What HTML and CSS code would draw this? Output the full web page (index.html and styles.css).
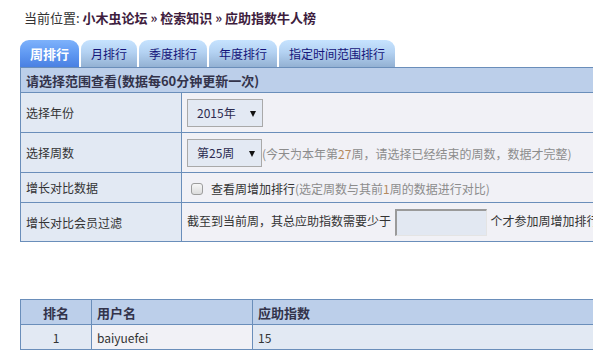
FILE: index.html
```html
<!DOCTYPE html>
<html lang="zh-CN">
<head>
<meta charset="utf-8">
<title>应助指数牛人榜</title>
<link rel="stylesheet" href="styles.css">
</head>
<body>
<div class="page">
  <div class="crumb">当前位置: <a class="crumb-link">小木虫论坛</a> <span class="sep">»</span> <a class="crumb-link">检索知识</a> <span class="sep">»</span> <a class="crumb-link">应助指数牛人榜</a></div>

  <div class="tabs">
    <div class="tab active">周排行</div>
    <div class="tab">月排行</div>
    <div class="tab">季度排行</div>
    <div class="tab">年度排行</div>
    <div class="tab">指定时间范围排行</div>
  </div>

  <table class="form-table">
    <tr class="head-row"><th colspan="2">请选择范围查看(数据每60分钟更新一次)</th></tr>
    <tr class="row-tall">
      <td class="label">选择年份</td>
      <td class="value"><span class="select sel-year">2015年<i class="arrow"></i></span></td>
    </tr>
    <tr class="row-tall">
      <td class="label">选择周数</td>
      <td class="value"><span class="select sel-week">第25周<i class="arrow"></i></span><span class="hint">(今天为本年第<span class="num">27</span>周，请选择已经结束的周数，数据才完整)</span></td>
    </tr>
    <tr class="row-short">
      <td class="label">增长对比数据</td>
      <td class="value"><span class="check"></span><span class="check-label">查看周增加排行</span><span class="hint">(选定周数与其前<span class="num">1</span>周的数据进行对比)</span></td>
    </tr>
    <tr class="row-mid">
      <td class="label">增长对比会员过滤</td>
      <td class="value nowrap">截至到当前周，其总应助指数需要少于 <span class="text-input"></span> 个才参加周增加排行榜</td>
    </tr>
  </table>

  <table class="rank-table">
    <tr class="rank-head">
      <th class="c-rank">排名</th>
      <th class="c-user">用户名</th>
      <th class="c-score">应助指数</th>
    </tr>
    <tr class="rank-row">
      <td class="c-rank cell-blue">1</td>
      <td class="c-user cell-gray">baiyuefei</td>
      <td class="c-score cell-blue">15</td>
    </tr>
  </table>
</div>
</body>
</html>
```

FILE: styles.css
```css
html, body {
  margin: 0;
  padding: 0;
  overflow: hidden;
  background: #ffffff;
}

body {
  font-family: "Noto Sans CJK SC", "Noto Sans", sans-serif;
  font-size: 12px;
  color: #333333;
}

.page {
  width: 1100px;
  padding: 0 0 0 20px;
}

.crumb {
  padding: 8px 0 0 4px;
  height: 20px;
  line-height: 20px;
  font-size: 13px;
  color: #333333;
  margin-bottom: 12px;
}

.crumb-link {
  font-weight: bold;
  color: #3e1d3e;
}

.sep {
  font-weight: bold;
  color: #3e1d3e;
}

.tabs {
  display: flex;
  gap: 2px;
  height: 27px;
  align-items: stretch;
}

.tab {
  padding: 0 10px;
  line-height: 27px;
  font-size: 12px;
  color: #14147a;
  border-radius: 9px 9px 0 0;
  background: linear-gradient(to bottom, #c6e3ff 0%, #b4d2f2 45%, #93b1d3 100%);
}

.tab.active {
  font-size: 13px;
  font-weight: bold;
  color: #ffffff;
  padding: 0 10px;
  background: linear-gradient(to bottom, #7eb2fb 0%, #6099f2 50%, #4a80e2 100%);
}

.form-table,
.rank-table {
  border-collapse: collapse;
  width: 1000px;
}

.form-table th,
.form-table td,
.rank-table th,
.rank-table td {
  border: 1px solid #6a8eba;
  padding: 0 5px;
  text-align: left;
}

.head-row th {
  height: 24px;
  background: #bccfea;
  font-size: 13px;
  font-weight: bold;
  color: #33334a;
}

.label {
  width: 150px;
  background: #e2e9f3;
}

.value {
  background: #f1f1f6;
}

.nowrap {
  white-space: nowrap;
}

.row-tall td {
  height: 39px;
}

.row-short td {
  height: 29px;
}

.row-mid td {
  height: 38px;
}

.select {
  display: inline-flex;
  align-items: center;
  box-sizing: border-box;
  height: 28px;
  padding: 0 0 0 9px;
  border: 1px solid #a9a9a9;
  background: #e3e9f3;
  color: #2b2b4f;
  vertical-align: middle;
  position: relative;
}

.sel-year {
  width: 76px;
}

.sel-week {
  width: 75px;
}

.arrow {
  position: absolute;
  right: 6px;
  top: 11px;
  width: 0;
  height: 0;
  border-left: 3px solid transparent;
  border-right: 3px solid transparent;
  border-top: 6px solid #111111;
}

.hint {
  color: #8c8c8c;
  vertical-align: middle;
}

.num {
  color: #b58a5e;
}

.check {
  display: inline-block;
  box-sizing: border-box;
  width: 12px;
  height: 12px;
  margin: 0 8px 0 4px;
  border: 1px solid #9d9d9d;
  border-radius: 3px;
  background: linear-gradient(to bottom, #f7f7f7, #dcdcdc);
  vertical-align: middle;
}

.check-label {
  vertical-align: middle;
}

.text-input {
  display: inline-block;
  box-sizing: border-box;
  width: 92px;
  height: 27px;
  border-top: 2px solid #9a9a9a;
  border-left: 2px solid #9a9a9a;
  border-right: 1px solid #e4e4e4;
  border-bottom: 1px solid #e4e4e4;
  background: #e2e8f2;
  vertical-align: middle;
  margin: 0 1px;
}

.rank-table {
  margin-top: 57px;
}

.rank-head th {
  height: 24px;
  background: #bccfea;
  font-size: 13px;
  font-weight: bold;
  color: #33334a;
}

.rank-row td {
  height: 24px;
}

.c-rank {
  width: 60px;
}

.rank-table .c-rank {
  text-align: center;
}

.c-user {
  width: 150px;
}

.cell-blue {
  background: #e2e9f3;
}

.cell-gray {
  background: #f1f1f6;
}
```
